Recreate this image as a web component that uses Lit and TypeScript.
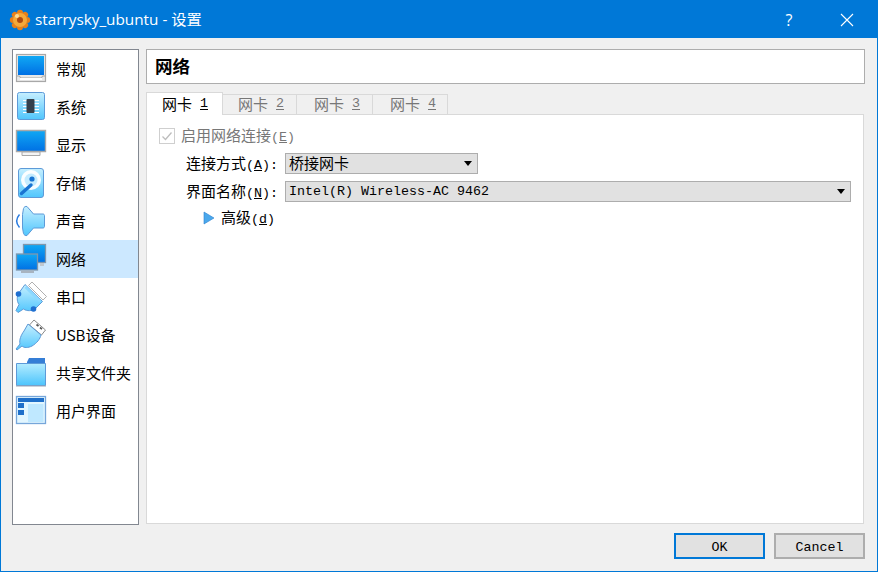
import { LitElement, html, css, svg } from "lit";
import { customElement } from "lit/decorators.js";

const defs = svg`
<defs>
  <linearGradient id="scr" x1="0" y1="0" x2="0" y2="1"><stop offset="0" stop-color="#10a8f4"/><stop offset="1" stop-color="#0070e4"/></linearGradient>
  <linearGradient id="pale" x1="0" y1="0" x2="0" y2="1"><stop offset="0" stop-color="#c6efff"/><stop offset="1" stop-color="#50c6fd"/></linearGradient>
  <linearGradient id="fold" x1="0" y1="0" x2="0" y2="1"><stop offset="0" stop-color="#b4ecff"/><stop offset="1" stop-color="#4cc4fc"/></linearGradient>
</defs>`;

const icons: Record<string, unknown> = {
  general: svg`<rect x="1.500" y="1.500" width="29" height="27" fill="#e8e8e8" stroke="#a8a8a8" stroke-width="1.200"/><rect x="3" y="3" width="26" height="19" fill="url(#scr)"/><path d="M1.500 23h3l1 2h21l1-2h3" fill="none" stroke="#a8a8a8"/><rect x="5" y="25" width="22" height="2" fill="#fff"/>`,
  system: svg`<rect x="2.500" y="1.500" width="27" height="27" rx="2" fill="url(#pale)" stroke="#5d9ad8"/><g stroke="#fff" stroke-width="1"><path d="M8 9.500h16M8 12.500h16M8 15.500h16M8 18.500h16M8 21.500h16"/></g><rect x="11.500" y="8" width="8" height="14" rx="1" fill="#36404c"/>`,
  display: svg`<path d="M1.500 1.500h29v21h-29z" fill="url(#scr)" stroke="#a8a8a8" stroke-width="1.400"/><path d="M7 23h18v3.500H7z" fill="#f4f4f4" stroke="#a8a8a8"/>`,
  storage: svg`<rect x="3.500" y="1.500" width="25" height="29" rx="2.500" fill="url(#pale)" stroke="#5d9ad8"/><circle cx="16" cy="13" r="10" fill="#fff" opacity=".95"/><circle cx="16" cy="13" r="6.500" fill="#c4ecff"/><circle cx="17" cy="12" r="2.600" fill="#1874d2"/><path d="M6.500 26.500 16 18" stroke="#1874d2" stroke-width="3.400" stroke-linecap="round"/>`,
  sound: svg`<path d="M7.500 9.500 8.500 3.500C9 2 10.500 1 12 1.500L18.500 9H28c.8 0 1.500.7 1.500 1.500v11c0 .8-.7 1.500-1.500 1.500H18.500L12 30.500c-1.500.5-3-.5-3.500-2l-1-5.500z" fill="url(#pale)" stroke="#5d9ad8"/><path d="M4.500 9.500c-3.500 4-3.500 9 0 13" fill="none" stroke="#2a7ce0" stroke-width="1.500"/>`,
  network: svg`<rect x="8.500" y="1.500" width="22" height="18" fill="url(#scr)" stroke="#7f97ad" stroke-width="1.300"/><path d="M25 20h4v3h-4z" fill="#c0c8d0"/><rect x="1.500" y="11" width="21" height="16" fill="url(#scr)" stroke="#7f97ad" stroke-width="1.300"/><path d="M6 27.500h13v2.500H6z" fill="#a8b4c0"/>`,
  serial: svg`<path d="M17 1 31.500 15.500 28 19 13.500 4.500z" fill="#fff" stroke="#b0b0b0"/><path d="M10 3.500 27.500 20.500 20.500 27.500C17 30 12 30.500 8.500 28L3 31.500 1 29.500 4 23.500C1.500 20 2 15 3.500 12.500z" fill="url(#pale)" stroke="#5d9ad8"/><path d="M10.500 6 25 20" stroke="#8cd8ff" stroke-width="2.500"/><circle cx="3.500" cy="13" r="2.800" fill="#1f6fd0"/><circle cx="18.500" cy="28" r="2.800" fill="#1f6fd0"/>`,
  usb: svg`<path d="M19 1 30.500 11l-4 5-12-10z" fill="#fff" stroke="#8a8a8a"/><path d="M21.500 5.500l2 1.600M25 8.500l2 1.600" stroke="#555" stroke-width="1.800"/><path d="M13 5l13 11c-1 4-4 8-9 11-4 2-8 2-10 0l-5 4-1-1 4-5c-1-4 1-9 4-13z" fill="url(#pale)" stroke="#5d9ad8"/>`,
  folder: svg`<path d="M12 5l2-4h16v6H12z" fill="#357ed6"/><path d="M1.500 6.500h29v22h-29z" fill="url(#fold)" stroke="#5d9ad8"/><path d="M1 29h30" stroke="#9aa6b4" stroke-width="1"/>`,
  ui: svg`<rect x="1.500" y="1.500" width="29" height="27" fill="#e2f6ff" stroke="#76a6da" stroke-width="1.300"/><rect x="3" y="3" width="26" height="4" fill="#1f6fc9"/><rect x="3" y="8" width="6" height="5" fill="#1f6fc9"/><rect x="3" y="15" width="6" height="5" fill="#1f6fc9"/><rect x="13" y="9" width="15.500" height="18" fill="#bfe8ff"/>`,
};

const nav = [
  ["general", "常规"], ["system", "系统"], ["display", "显示"], ["storage", "存储"], ["sound", "声音"],
  ["network", "网络"], ["serial", "串口"], ["usb", "USB设备"], ["folder", "共享文件夹"], ["ui", "用户界面"],
];

@customElement("app-root")
export class AppRoot extends LitElement {
  static styles = css`
    :host { display: block; width: 878px; height: 572px; font-family: "Noto Sans CJK SC", "Noto Sans", sans-serif; color: #000; }
    .win { box-sizing: border-box; width: 878px; height: 572px; border: 1px solid #0078d7; background: #f0f0f0; display: flex; flex-direction: column; }
    .title { height: 37px; flex: none; background: #0078d7; color: #fff; display: flex; align-items: center; padding: 0 1px 0 8px; }
    .logo { width: 22px; height: 22px; flex: none; }
    .title-text { margin: 0 0 3px 4px; font-size: 15.300px; font-family: "Open Sans", "Noto Sans CJK SC", sans-serif; flex: 1; white-space: nowrap; }
    .ctl { width: 58px; flex: none; display: flex; justify-content: center; align-items: center; font-size: 16px; font-family: "Open Sans", sans-serif; }
    .ctl svg { display: block; }
    .main { flex: 1; display: flex; gap: 7px; padding: 11px 12px 0 11px; min-height: 0; }
    .side { box-sizing: border-box; width: 127px; height: 476px; flex: none; background: #fff; border: 1px solid #828790; }
    .item { height: 38px; display: flex; align-items: center; padding-left: 2px; font-size: 15px; white-space: nowrap; }
    .item.sel { background: #cce8ff; }
    .item svg { width: 32px; height: 32px; flex: none; margin-right: 9px; overflow: visible; }
    .item span { margin-bottom: 2px; }
    .right { flex: 1; min-width: 0; display: flex; flex-direction: column; }
    .head { box-sizing: border-box; height: 35px; background: #fff; border: 1px solid #adadad; display: flex; align-items: center; padding: 0 0 3px 8px; font-size: 17.500px; font-weight: 700; flex: none; }
    .tabs { display: flex; align-items: flex-end; margin-top: 8px; height: 23px; flex: none; position: relative; z-index: 1; margin-bottom: -1px; }
    .tab { box-sizing: border-box; height: 21px; border: 1px solid #d9d9d9; border-left: 0; display: flex; align-items: center; padding-bottom: 2px; color: #777; font-size: 15px; white-space: nowrap; background: #f0f0f0; }
    .tab.on { height: 23px; border: 1px solid #d9d9d9; border-bottom: 0; background: #fff; color: #000; }
    .m { font-family: "Liberation Mono", monospace; font-size: 13.330px; }
    u.m { text-underline-offset: 2px; }
    .tab .m { margin-left: 8px; }
    .panel { box-sizing: border-box; width: 718px; height: 410px; background: #fff; border: 1px solid #d9d9d9; padding: 11px 0 0 12px; flex: none; }
    .check { display: flex; align-items: center; gap: 6px; color: #777; font-size: 15px; height: 20px; }
    .check .t { margin-bottom: 4px; }
    .adv .t { margin-bottom: 3px; }
    .box { box-sizing: border-box; width: 16px; height: 16px; border: 1px solid #cfcfcf; background: #fff; display: flex; flex: none; }
    .form { display: grid; grid-template-columns: 92px auto; grid-auto-rows: 21px; column-gap: 7px; row-gap: 7px; margin: 7px 0 0 27px; justify-content: start; font-size: 15px; align-items: center; }
    .label { white-space: nowrap; margin-bottom: 3px; }
    .combo { box-sizing: border-box; height: 21px; border: 1px solid #adadad; background: #e1e1e1; display: flex; align-items: center; justify-content: space-between; padding: 0 4px 0 3px; font-size: 15px; white-space: nowrap; }
    .combo .t { margin-bottom: 3px; }
    .c1 { width: 193px; }
    .c2 { width: 566px; }
    .caret { width: 0; height: 0; border-left: 4px solid transparent; border-right: 4px solid transparent; border-top: 5px solid #000; margin-right: 1px; }
    .adv { display: flex; align-items: center; gap: 6px; margin: 6px 0 0 44px; font-size: 15px; height: 20px; }
    .adv svg { display: block; flex: none; }
    .foot { display: flex; justify-content: flex-end; gap: 9px; padding: 9px 12px 12px 0; flex: none; }
    .btn { box-sizing: border-box; width: 91px; height: 26px; background: #e1e1e1; border: 2px solid #adadad; display: flex; align-items: center; justify-content: center; padding-top: 2px; }
    .btn.def { border-color: #0078d7; }
  `;

  tab(n: number, on: boolean, w: number, pad: number) {
    return html`<div class="tab ${on ? "on" : ""}" style="width:${w}px;padding-left:${pad}px">网卡<u class="m">${n}</u></div>`;
  }

  render() {
    return html`<div class="win">
      <div class="title">
        <svg class="logo" viewBox="0 0 22 22">
          <g fill="#e8801a">${[0, 45, 90, 135, 180, 225, 270, 315].map((a) => svg`<circle cx="11" cy="3.800" r="3" transform="rotate(${a} 11 11)"/>`)}</g>
          <circle cx="11" cy="11" r="7" fill="#f6a93a"/>
          <circle cx="11" cy="11" r="3" fill="#b04a10"/>
          <circle cx="8" cy="7" r="2" fill="#fde9b0" opacity=".8"/>
        </svg>
        <div class="title-text">starrysky_ubuntu - 设置</div>
        <div class="ctl">?</div>
        <div class="ctl"><svg width="14" height="14" viewBox="0 0 14 14"><path d="M1 1l12 12M13 1 1 13" stroke="#fff" stroke-width="1.100"/></svg></div>
      </div>
      <div class="main">
        <div class="side">
          ${nav.map(([k, t]) => html`<div class="item ${k === "network" ? "sel" : ""}"><svg viewBox="0 0 32 32">${defs}${icons[k]}</svg><span>${t}</span></div>`)}
        </div>
        <div class="right">
          <div class="head">网络</div>
          <div class="tabs">${this.tab(1, true, 77, 15)}${this.tab(2, false, 74, 15)}${this.tab(3, false, 76, 17)}${this.tab(4, false, 75, 17)}</div>
          <div class="panel">
            <div class="check">
              <span class="box"><svg width="14" height="14" viewBox="0 0 14 14"><path d="M2.500 7.500l3 3 6-7" fill="none" stroke="#bdbdbd" stroke-width="1.300"/></svg></span>
              <span class="t">启用网络连接<span class="m">(<u>E</u>)</span></span>
            </div>
            <div class="form">
              <div class="label">连接方式<span class="m">(<u>A</u>):</span></div>
              <div class="combo c1"><span class="t">桥接网卡</span><span class="caret"></span></div>
              <div class="label">界面名称<span class="m">(<u>N</u>):</span></div>
              <div class="combo c2"><span class="m">Intel(R) Wireless-AC 9462</span><span class="caret"></span></div>
            </div>
            <div class="adv">
              <svg width="12" height="14" viewBox="0 0 12 14"><path d="M1 1v12l10-6z" fill="#4aa8ec" stroke="#2a80d0" stroke-width=".6"/></svg>
              <span class="t">高级<span class="m">(<u>d</u>)</span></span>
            </div>
          </div>
        </div>
      </div>
      <div class="foot">
        <div class="btn def m">OK</div>
        <div class="btn m">Cancel</div>
      </div>
    </div>`;
  }
}
